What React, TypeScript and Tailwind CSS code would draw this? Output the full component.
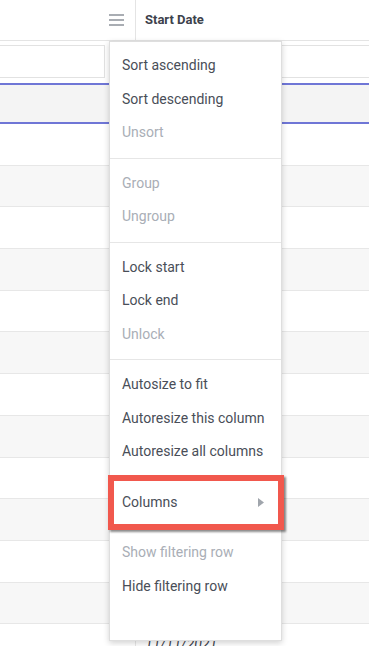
import React from 'react';

type MenuItem = { label: string; disabled?: boolean; submenu?: boolean };

const sections: MenuItem[][] = [
  [{ label: 'Sort ascending' }, { label: 'Sort descending' }, { label: 'Unsort', disabled: true }],
  [{ label: 'Group', disabled: true }, { label: 'Ungroup', disabled: true }],
  [{ label: 'Lock start' }, { label: 'Lock end' }, { label: 'Unlock', disabled: true }],
  [{ label: 'Autosize to fit' }, { label: 'Autoresize this column' }, { label: 'Autoresize all columns' }],
  [{ label: 'Columns', submenu: true }],
  [{ label: 'Show filtering row', disabled: true }, { label: 'Hide filtering row' }],
];

// only the last row's date peeks out from under the menu
const rows = Array.from({ length: 13 }, (_, i) => (i === 12 ? '11/11/2021' : ''));

const HamburgerIcon = () => (
  <svg width="15" height="12" viewBox="0 0 15 12" className="text-[#8d929a]">
    <path d="M0 1h15M0 6h15M0 11h15" stroke="currentColor" strokeWidth="1.4" />
  </svg>
);

const ColumnMenu: React.FC = () => (
  <div className="absolute left-[109px] top-[41px] z-10 h-[600px] w-[173px] border border-[#dedede] bg-white py-[7px] shadow-[0_2px_6px_rgba(0,0,0,0.18)]">
    {sections.map((items, i) => (
      <div key={i}>
        {i > 0 && <div className="my-[8px] border-t border-[#e6e6e6]" />}
        {items.map((item) => (
          <div
            key={item.label}
            className={`flex h-[33.5px] items-center justify-between whitespace-nowrap pl-[12px] pr-[17px] text-[14px] ${
              item.disabled ? 'text-[#a9aeb6]' : 'text-[#494e58]'
            }`}
          >
            <span>{item.label}</span>
            {item.submenu && (
              <svg width="6" height="9" viewBox="0 0 6 9">
                <path d="M0 0l6 4.5L0 9z" fill="#a0a5ac" />
              </svg>
            )}
          </div>
        ))}
      </div>
    ))}
  </div>
);

export default function App() {
  return (
    <div className="relative h-[646px] w-[369px] overflow-hidden bg-white font-['Roboto','Liberation_Sans',sans-serif]">
      {/* header */}
      <div className="flex h-[41px] border-b border-[#e4e4e4]">
        <div className="flex w-[136px] items-center justify-end border-r border-[#e4e4e4] pr-[11px]">
          <HamburgerIcon />
        </div>
        <div className="flex items-center pl-[9px] text-[13px] font-bold text-[#3d424c]">Start Date</div>
      </div>

      {/* filter row */}
      <div className="flex h-[37px] pt-[4px]">
        <div className="ml-[-1px] h-[33px] w-[106px] border border-[#e2e2e2]" />
        <div className="ml-[34px] h-[33px] flex-1 border border-r-0 border-[#e2e2e2]" />
      </div>

      {/* selected row */}
      <div className="mt-[5px] h-[41px] border-t-2 border-b-2 border-t-[#6f76d6] border-b-[#6f76d6] bg-[#f4f4f4]" />

      {/* body rows */}
      {rows.map((d, i) => (
        <div
          key={i}
          className={`flex h-[41.7px] border-b border-[#e7e7e7] ${i % 2 === 1 ? 'bg-[#f7f7f7]' : 'bg-white'}`}
        >
          <div className="w-[136px] border-r border-[#e7e7e7]" />
          <div className="flex items-center pl-[9px] text-[14px] italic text-[#3d424c]">{d}</div>
        </div>
      ))}

      <ColumnMenu />

      {/* annotation highlight */}
      <div className="absolute left-[108px] top-[475px] z-20 h-[55px] w-[176px] border-[6px] border-[#f1584d] shadow-[2px_2px_2px_rgba(0,0,0,0.45)]" />
    </div>
  );
}
